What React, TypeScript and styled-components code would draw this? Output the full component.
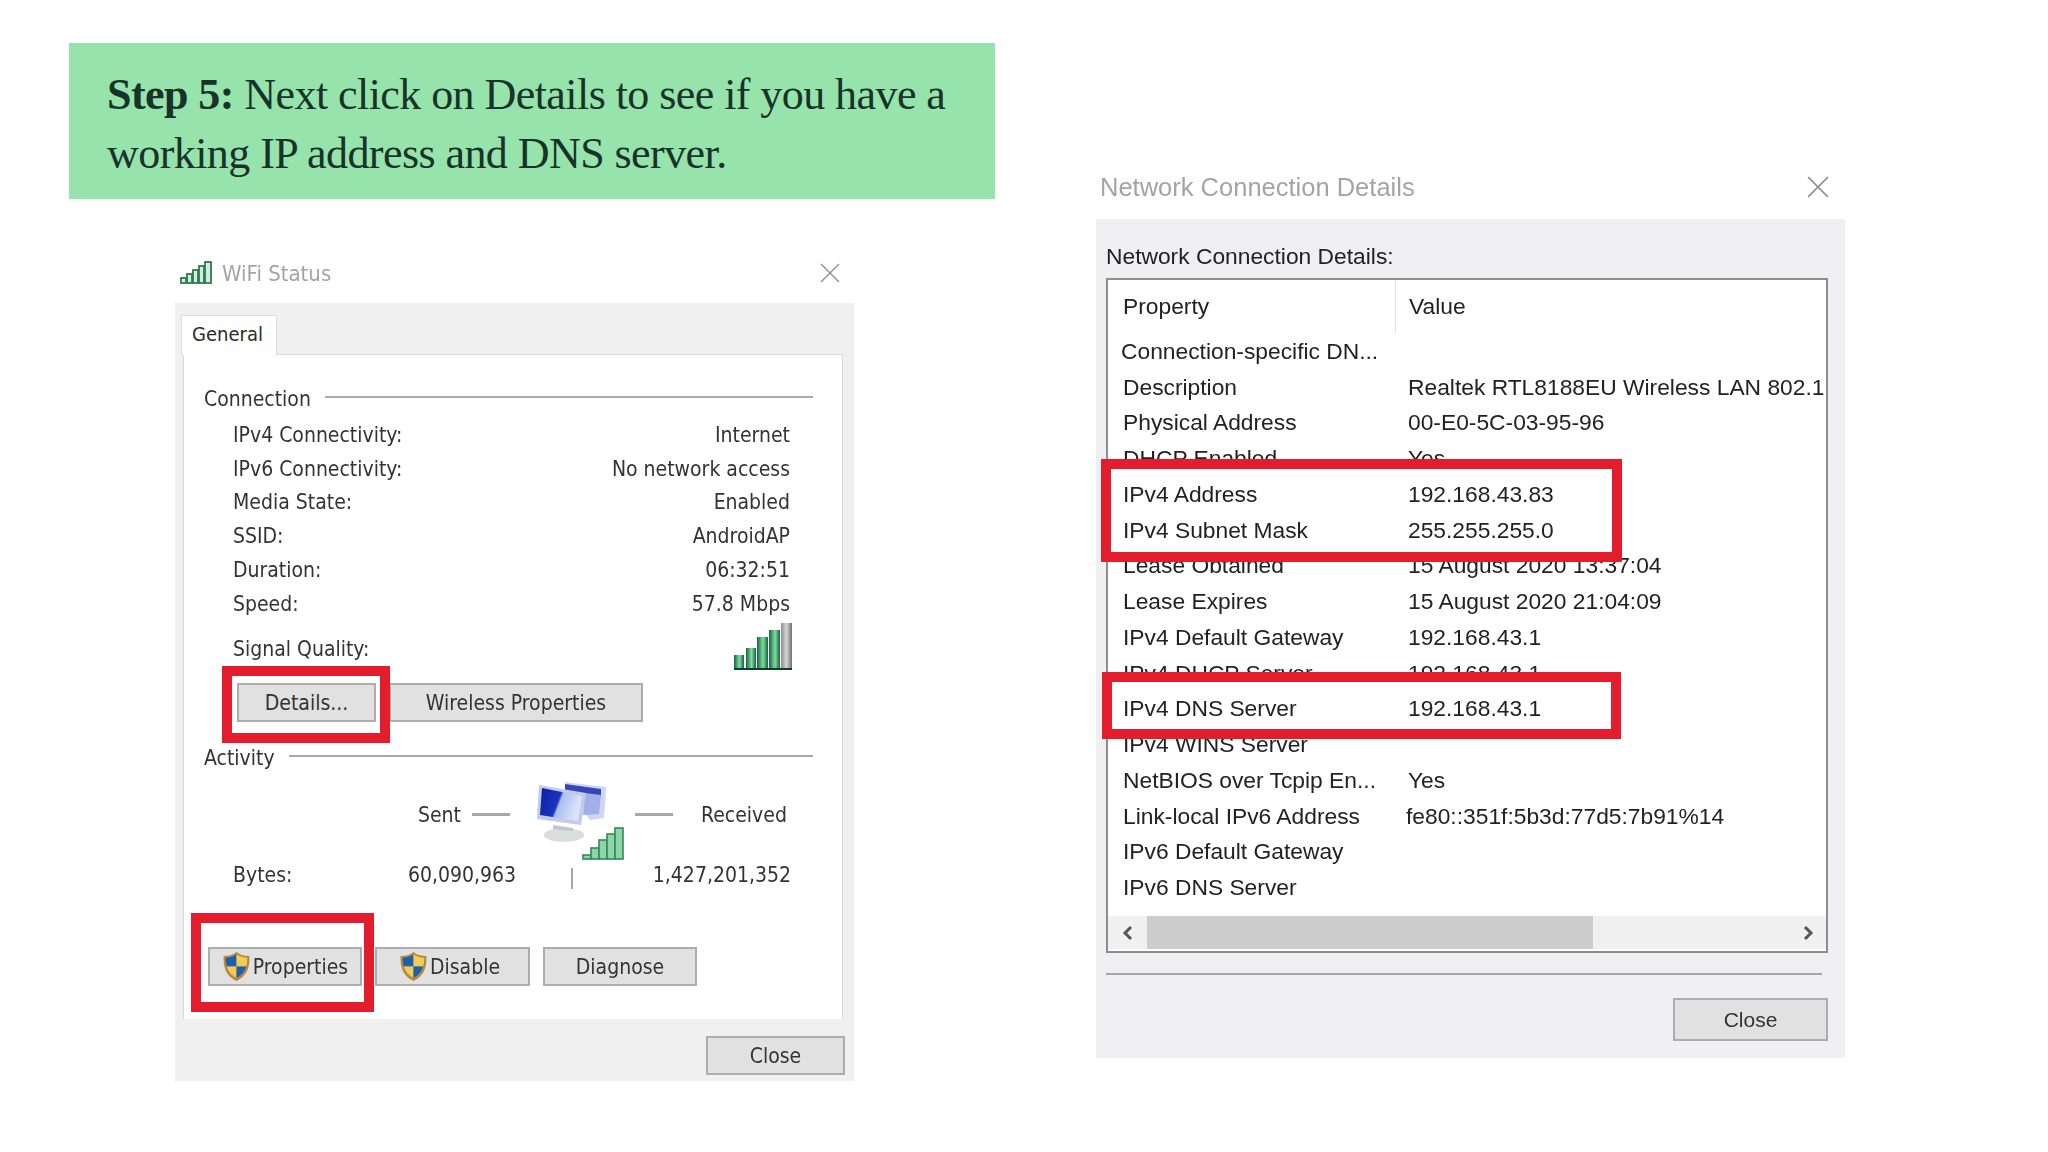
import styled, { createGlobalStyle } from "styled-components";

const GlobalStyle = createGlobalStyle`
    html, body {
        margin: 0;
        padding: 0;
        background: #ffffff;
    }
`;

const Page = styled.div`
    width: 2048px;
    height: 1152px;
    display: flex;
    overflow: hidden;
    background: #ffffff;
`;

const LeftColumn = styled.div`
    width: 926px;
    margin-left: 69px;
    padding-top: 43px;
    display: flex;
    flex-direction: column;
`;

const RightColumn = styled.div`
    width: 749px;
    margin-left: 101px;
    padding-top: 157px;
`;

const Banner = styled.div`
    height: 156px;
    box-sizing: border-box;
    padding: 22px 0 0 38px;
    background: #96e3ab;
    color: #17332a;
    font-family: "Liberation Serif", "Times New Roman", serif;
    font-size: 44px;
    letter-spacing: -0.56px;
    line-height: 59px;
    strong {
        font-weight: bold;
    }
`;

const Dialog = styled.div<{ $width: number; $left: number; $top: number }>`
    width: ${props => props.$width}px;
    margin-left: ${props => props.$left}px;
    margin-top: ${props => props.$top}px;
    font-family: "DejaVu Sans Condensed", "DejaVu Sans", sans-serif;
    filter: blur(0.55px);
`;

const TitleBar = styled.div<{ $pad: number; $end: number }>`
    height: 60px;
    display: flex;
    align-items: center;
    padding: 0 ${props => props.$end}px 0 ${props => props.$pad}px;
    color: #a4a4a4;
    font-size: 22px;
`;

const TitleText = styled.div<{ $gap?: number }>`
    flex: 1;
    margin-left: ${props => props.$gap || 0}px;
`;

const DetailsTitle = styled(TitleText)`
    font-family: "Liberation Sans", Arial, sans-serif;
    font-size: 25.5px;
`;

const WifiPanel = styled.div`
    background: #f0f0f0;
    height: 778px;
    box-sizing: border-box;
    padding: 12px 11px 0 8px;
`;

const Tab = styled.div`
    width: 96px;
    height: 40px;
    margin-left: -2px;
    box-sizing: border-box;
    display: flex;
    align-items: center;
    padding: 0 0 4px 10px;
    background: #ffffff;
    border: 1px solid #dcdcdc;
    border-bottom: none;
    position: relative;
    z-index: 1;
    margin-bottom: -1px;
    color: #2c2c2c;
    font-size: 20px;
`;

const TabPane = styled.div`
    height: 665px;
    box-sizing: border-box;
    padding-top: 32px;
    background: #ffffff;
    border: 1px solid #d8d8d8;
    border-bottom: none;
    color: #333333;
    font-size: 21px;
`;

const GroupHeader = styled.div<{ $gap: number; $top?: number }>`
    height: 24px;
    display: flex;
    align-items: center;
    gap: ${props => props.$gap}px;
    margin: ${props => props.$top || 0}px 29px 0 20px;
    &::after {
        content: "";
        flex: 1;
        height: 2px;
        margin-top: -4px;
        background: #a9a9a9;
    }
`;

const StatusList = styled.div`
    margin-top: 7px;
    padding: 0 52px 0 49px;
`;

const StatusRow = styled.div`
    height: 33.8px;
    display: flex;
    align-items: center;
    justify-content: space-between;
`;

const SignalRow = styled.div`
    height: 47px;
    margin: 2px 48px 0 49px;
    display: flex;
    align-items: center;
    justify-content: space-between;
    > div {
        padding-top: 5px;
    }
`;

const ButtonRow = styled.div<{ $gap: number; $left: number; $top: number }>`
    display: flex;
    gap: ${props => props.$gap}px;
    margin: ${props => props.$top}px 0 0 ${props => props.$left}px;
`;

const PushButton = styled.div<{ $width: number; $height?: number; $inset?: number }>`
    width: ${props => props.$width}px;
    height: ${props => props.$height || 39}px;
    box-sizing: border-box;
    display: flex;
    align-items: center;
    justify-content: center;
    gap: 2px;
    background: #e1e1e1;
    border: 2px solid #adadad;
    color: #333333;
    font-size: 21px;
    padding: 1px ${props => props.$inset || 0}px 0 0;
`;

const Highlight = styled.div<{ $top: number; $right: number; $bottom: number; $left: number }>`
    position: relative;
    &::after {
        content: "";
        position: absolute;
        top: ${props => props.$top}px;
        right: ${props => props.$right}px;
        bottom: ${props => props.$bottom}px;
        left: ${props => props.$left}px;
        border: 10px solid #e31c2e;
        z-index: 2;
    }
`;

const TrafficRow = styled.div`
    height: 77px;
    margin-top: 11px;
    display: flex;
    padding-left: 50px;
`;

const SentGroup = styled.div`
    width: 301px;
    height: 68px;
    box-sizing: border-box;
    padding-right: 25px;
    display: flex;
    align-items: center;
    justify-content: flex-end;
    gap: 11px;
`;

const ReceivedGroup = styled.div`
    height: 68px;
    margin-left: 10px;
    display: flex;
    align-items: center;
    gap: 28px;
`;

const Dash = styled.div`
    width: 38px;
    height: 3px;
    background: #a8a8a8;
`;

const BytesRow = styled.div`
    height: 34px;
    display: grid;
    grid-template-columns: 175px 108px 56px 1fr;
    align-items: center;
    padding: 0 51px 0 49px;
    div:nth-child(2), div:nth-child(4) {
        text-align: right;
    }
`;

const Tick = styled.div`
    width: 2px;
    height: 21px;
    margin: 7px 0 0 55px;
    background: #a8a8a8;
`;

const DialogFooter = styled.div`
    display: flex;
    justify-content: flex-end;
    padding: 17px 0 0;
    margin-right: -2px;
`;

const DetailsPanel = styled.div`
    margin-top: 2px;
    height: 839px;
    box-sizing: border-box;
    padding: 25px 17px 17px 10px;
    background: #f0f0f2;
    color: #222222;
    font-family: "Liberation Sans", Arial, sans-serif;
    font-size: 22.8px;
    display: flex;
    flex-direction: column;
`;

const DetailsLabel = styled.div`
    height: 24px;
    line-height: 24px;
`;

const ListBox = styled.div`
    height: 676px;
    box-sizing: border-box;
    margin-top: 10px;
    display: flex;
    flex-direction: column;
    background: #ffffff;
    border: 2px solid #8d8d8d;
`;

const ListHeader = styled.div`
    height: 53.5px;
    flex: none;
    display: flex;
    align-items: center;
`;

const HeaderCell = styled.div<{ $width?: number }>`
    width: ${props => props.$width ? `${props.$width}px` : "auto"};
    height: 100%;
    box-sizing: border-box;
    display: flex;
    align-items: center;
    padding-left: ${props => props.$width ? 15 : 13}px;
    border-right: ${props => props.$width ? "1px solid #e2e2e2" : "none"};
`;

const ListRow = styled.div`
    height: 35.75px;
    display: flex;
    align-items: center;
    white-space: nowrap;
`;

const PropertyCell = styled.div<{ $nudge?: number }>`
    flex: 0 0 300px;
    box-sizing: border-box;
    padding-left: ${props => 15 - (props.$nudge || 0)}px;
`;

const ValueCell = styled.div<{ $nudge?: number }>`
    margin-left: ${props => -(props.$nudge || 0)}px;
`;

const ScrollBar = styled.div`
    margin: auto 0 2px;
    height: 33px;
    flex: none;
    display: flex;
    align-items: center;
    justify-content: space-between;
    padding: 0 12px 0 14px;
    background: #f0f0f0;
    position: relative;
`;

const ScrollThumb = styled.div`
    position: absolute;
    left: 39px;
    top: 0;
    width: 446px;
    height: 100%;
    background: #cdcdcd;
`;

const Rule = styled.div`
    height: 2px;
    margin: 20px 6px 0 0;
    flex: none;
    background: #a5a5a5;
`;

const DetailsFooter = styled.div`
    margin-top: 23px;
    display: flex;
    justify-content: flex-end;
`;

const CloseCross = ({ size }: { size: number }) => (
    <svg width={size} height={size} viewBox="0 0 20 20">
        <path d="M1 1 19 19M19 1 1 19" stroke="#8f8f8f" strokeWidth="1.4" fill="none" />
    </svg>
);

const TitleSignal = () => (
    <svg width="32" height="24" viewBox="0 0 32 24">
        {[[1, 17, 5], [7, 13, 5], [13, 9, 5], [19, 5, 5], [25, 1, 6]].map(([x, y, w]) => (
            <rect key={x} x={x} y={y} width={w} height={22 - y} fill="#d5ecdc" stroke="#2f7a50" strokeWidth="1.8" />
        ))}
    </svg>
);

const BigSignal = () => (
    <svg width="60" height="48" viewBox="0 0 60 48">
        <defs>
            <linearGradient id="barGreen" x1="0" y1="0" x2="1" y2="0">
                <stop offset="0" stopColor="#14663c" />
                <stop offset="0.55" stopColor="#7fdca4" />
                <stop offset="1" stopColor="#15633a" />
            </linearGradient>
            <linearGradient id="barGrey" x1="0" y1="0" x2="1" y2="0">
                <stop offset="0" stopColor="#8e8e8e" />
                <stop offset="0.5" stopColor="#d4d4d4" />
                <stop offset="1" stopColor="#6f6f6f" />
            </linearGradient>
        </defs>
        <rect x="0" y="33" width="10" height="14" fill="url(#barGreen)" />
        <rect x="12" y="26" width="10" height="21" fill="url(#barGreen)" />
        <rect x="23" y="15" width="11" height="32" fill="url(#barGreen)" />
        <rect x="35" y="8" width="11" height="39" fill="url(#barGreen)" />
        <rect x="47" y="1" width="11" height="46" fill="url(#barGrey)" />
        <rect x="0" y="46" width="58" height="2" fill="#10402a" />
    </svg>
);

const MonitorIcon = () => (
    <svg width="90" height="80" viewBox="0 0 90 80" style={{ flex: "none" }}>
        <defs>
            <linearGradient id="screenBlue" x1="0" y1="0" x2="1" y2="0.3">
                <stop offset="0" stopColor="#0e1fa6" />
                <stop offset="0.5" stopColor="#1b34bd" />
                <stop offset="0.56" stopColor="#aabdf0" />
                <stop offset="1" stopColor="#dce4fa" />
            </linearGradient>
        </defs>
        <ellipse cx="29" cy="54" rx="20" ry="7" fill="#d9dedc" />
        <path d="M29 1 71 6 69 37 55 39 46 26Z" fill="#cfd5f2" />
        <path d="M30 3 66 8 66 16 30 10Z" fill="#3547b5" />
        <path d="M50 12 66 14 64 33 48 34Z" fill="#9fb0ea" />
        <path d="M4 4 51 12 46 44 2 38Z" fill="#c3caee" />
        <path d="M7 7 47 15 43 40 5 34Z" fill="url(#screenBlue)" />
        <path d="M18 44 38 47 38 50 18 48Z" fill="#bfc6d0" />
        {[[48, 74], [56, 67], [64, 59], [72, 53], [80, 47]].map(([x, y]) => (
            <rect key={x} x={x} y={y} width={8} height={78 - y} fill="#8fd3a8" stroke="#2f8a58" strokeWidth="1.6" />
        ))}
    </svg>
);

const ShieldIcon = () => (
    <svg width="29" height="31" viewBox="0 0 27 31" preserveAspectRatio="none" style={{ flex: "none" }}>
        <path d="M13.5 1C10 4 6 5 1.5 5 1 17 4 25 13.5 30 23 25 26 17 25.5 5 21 5 17 4 13.5 1Z" fill="#b58a3a" />
        <path d="M13.5 3.5C10.5 5.5 7 6.5 3.5 6.8 3.5 10 3.8 13 4.5 15.5H13.5Z" fill="#1f5fb0" />
        <path d="M13.5 3.5C16.5 5.5 20 6.5 23.5 6.8 23.5 10 23.2 13 22.5 15.5H13.5Z" fill="#f0cd5a" />
        <path d="M4.5 15.5H13.5V27C9 24.5 5.8 20.5 4.5 15.5Z" fill="#f0cd5a" />
        <path d="M22.5 15.5H13.5V27C18 24.5 21.2 20.5 22.5 15.5Z" fill="#1f5fb0" />
    </svg>
);

const ScrollChevron = ({ d }: { d: string }) => (
    <svg width="12" height="16" viewBox="0 0 12 16">
        <path d={d} stroke="#555555" strokeWidth="3" fill="none" />
    </svg>
);

const statusRows = [
    ["IPv4 Connectivity:", "Internet"],
    ["IPv6 Connectivity:", "No network access"],
    ["Media State:", "Enabled"],
    ["SSID:", "AndroidAP"],
    ["Duration:", "06:32:51"],
    ["Speed:", "57.8 Mbps"],
];

type DetailRow = { name: string; value?: string; nudge?: number; valueNudge?: number };

const rowsBefore: DetailRow[] = [
    { name: "Connection-specific DN...", nudge: 2 },
    { name: "Description", value: "Realtek RTL8188EU Wireless LAN 802.1" },
    { name: "Physical Address", value: "00-E0-5C-03-95-96" },
    { name: "DHCP Enabled", value: "Yes" },
];
const rowsAddress: DetailRow[] = [
    { name: "IPv4 Address", value: "192.168.43.83" },
    { name: "IPv4 Subnet Mask", value: "255.255.255.0" },
];
const rowsLease: DetailRow[] = [
    { name: "Lease Obtained", value: "15 August 2020 13:37:04" },
    { name: "Lease Expires", value: "15 August 2020 21:04:09" },
    { name: "IPv4 Default Gateway", value: "192.168.43.1" },
    { name: "IPv4 DHCP Server", value: "192.168.43.1" },
];
const rowsDns: DetailRow[] = [{ name: "IPv4 DNS Server", value: "192.168.43.1" }];
const rowsAfter: DetailRow[] = [
    { name: "IPv4 WINS Server" },
    { name: "NetBIOS over Tcpip En...", value: "Yes" },
    { name: "Link-local IPv6 Address", value: "fe80::351f:5b3d:77d5:7b91%14", valueNudge: 2 },
    { name: "IPv6 Default Gateway" },
    { name: "IPv6 DNS Server" },
];

const renderRows = (rows: DetailRow[]) => rows.map(row => (
    <ListRow key={row.name}>
        <PropertyCell $nudge={row.nudge}>{row.name}</PropertyCell>
        <ValueCell $nudge={row.valueNudge}>{row.value}</ValueCell>
    </ListRow>
));

const App = () => {
    return (
        <Page>
            <GlobalStyle />
            <LeftColumn>
                <Banner>
                    <strong>Step 5:</strong> Next click on Details to see if you have a<br />
                    working IP address and DNS server.
                </Banner>
                <Dialog $width={679} $left={106} $top={44}>
                    <TitleBar $pad={5} $end={14}>
                        <TitleSignal />
                        <TitleText $gap={10}>WiFi Status</TitleText>
                        <CloseCross size={20} />
                    </TitleBar>
                    <WifiPanel>
                        <Tab>General</Tab>
                        <TabPane>
                            <GroupHeader $gap={14}>Connection</GroupHeader>
                            <StatusList>
                                {statusRows.map(([name, value]) => (
                                    <StatusRow key={name}>
                                        <div>{name}</div>
                                        <div>{value}</div>
                                    </StatusRow>
                                ))}
                            </StatusList>
                            <SignalRow>
                                <div>Signal Quality:</div>
                                <BigSignal />
                            </SignalRow>
                            <ButtonRow $gap={13} $left={53} $top={13}>
                                <Highlight $top={-17} $right={-14} $bottom={-21} $left={-15}>
                                    <PushButton $width={139}>Details...</PushButton>
                                </Highlight>
                                <PushButton $width={254}>Wireless Properties</PushButton>
                            </ButtonRow>
                            <GroupHeader $gap={14} $top={24}>Activity</GroupHeader>
                            <TrafficRow>
                                <SentGroup>
                                    <div>Sent</div>
                                    <Dash />
                                </SentGroup>
                                <MonitorIcon />
                                <ReceivedGroup>
                                    <Dash />
                                    <div>Received</div>
                                </ReceivedGroup>
                            </TrafficRow>
                            <BytesRow>
                                <div>Bytes:</div>
                                <div>60,090,963</div>
                                <Tick />
                                <div>1,427,201,352</div>
                            </BytesRow>
                            <ButtonRow $gap={13} $left={24} $top={55}>
                                <Highlight $top={-34} $right={-12} $bottom={-26} $left={-17}>
                                    <PushButton $width={154}>
                                        <ShieldIcon />Properties
                                    </PushButton>
                                </Highlight>
                                <PushButton $width={155} $inset={6}>
                                    <ShieldIcon />Disable
                                </PushButton>
                                <PushButton $width={154}>Diagnose</PushButton>
                            </ButtonRow>
                        </TabPane>
                        <DialogFooter>
                            <PushButton $width={139}>Close</PushButton>
                        </DialogFooter>
                    </WifiPanel>
                </Dialog>
            </LeftColumn>
            <RightColumn>
                <Dialog $width={749} $left={0} $top={0}>
                    <TitleBar $pad={4} $end={16}>
                        <DetailsTitle>Network Connection Details</DetailsTitle>
                        <CloseCross size={22} />
                    </TitleBar>
                    <DetailsPanel>
                        <DetailsLabel>Network Connection Details:</DetailsLabel>
                        <ListBox>
                            <ListHeader>
                                <HeaderCell $width={288}>Property</HeaderCell>
                                <HeaderCell>Value</HeaderCell>
                            </ListHeader>
                            {renderRows(rowsBefore)}
                            <Highlight $top={-18} $right={204} $bottom={-14} $left={-7}>
                                {renderRows(rowsAddress)}
                            </Highlight>
                            {renderRows(rowsLease)}
                            <Highlight $top={-19} $right={205} $bottom={-12} $left={-6}>
                                {renderRows(rowsDns)}
                            </Highlight>
                            {renderRows(rowsAfter)}
                            <ScrollBar>
                                <ScrollThumb />
                                <ScrollChevron d="M9 2 3 8 9 14" />
                                <ScrollChevron d="M3 2 9 8 3 14" />
                            </ScrollBar>
                        </ListBox>
                        <Rule />
                        <DetailsFooter>
                            <PushButton $width={155} $height={43}>Close</PushButton>
                        </DetailsFooter>
                    </DetailsPanel>
                </Dialog>
            </RightColumn>
        </Page>
    );
};

export default App;
